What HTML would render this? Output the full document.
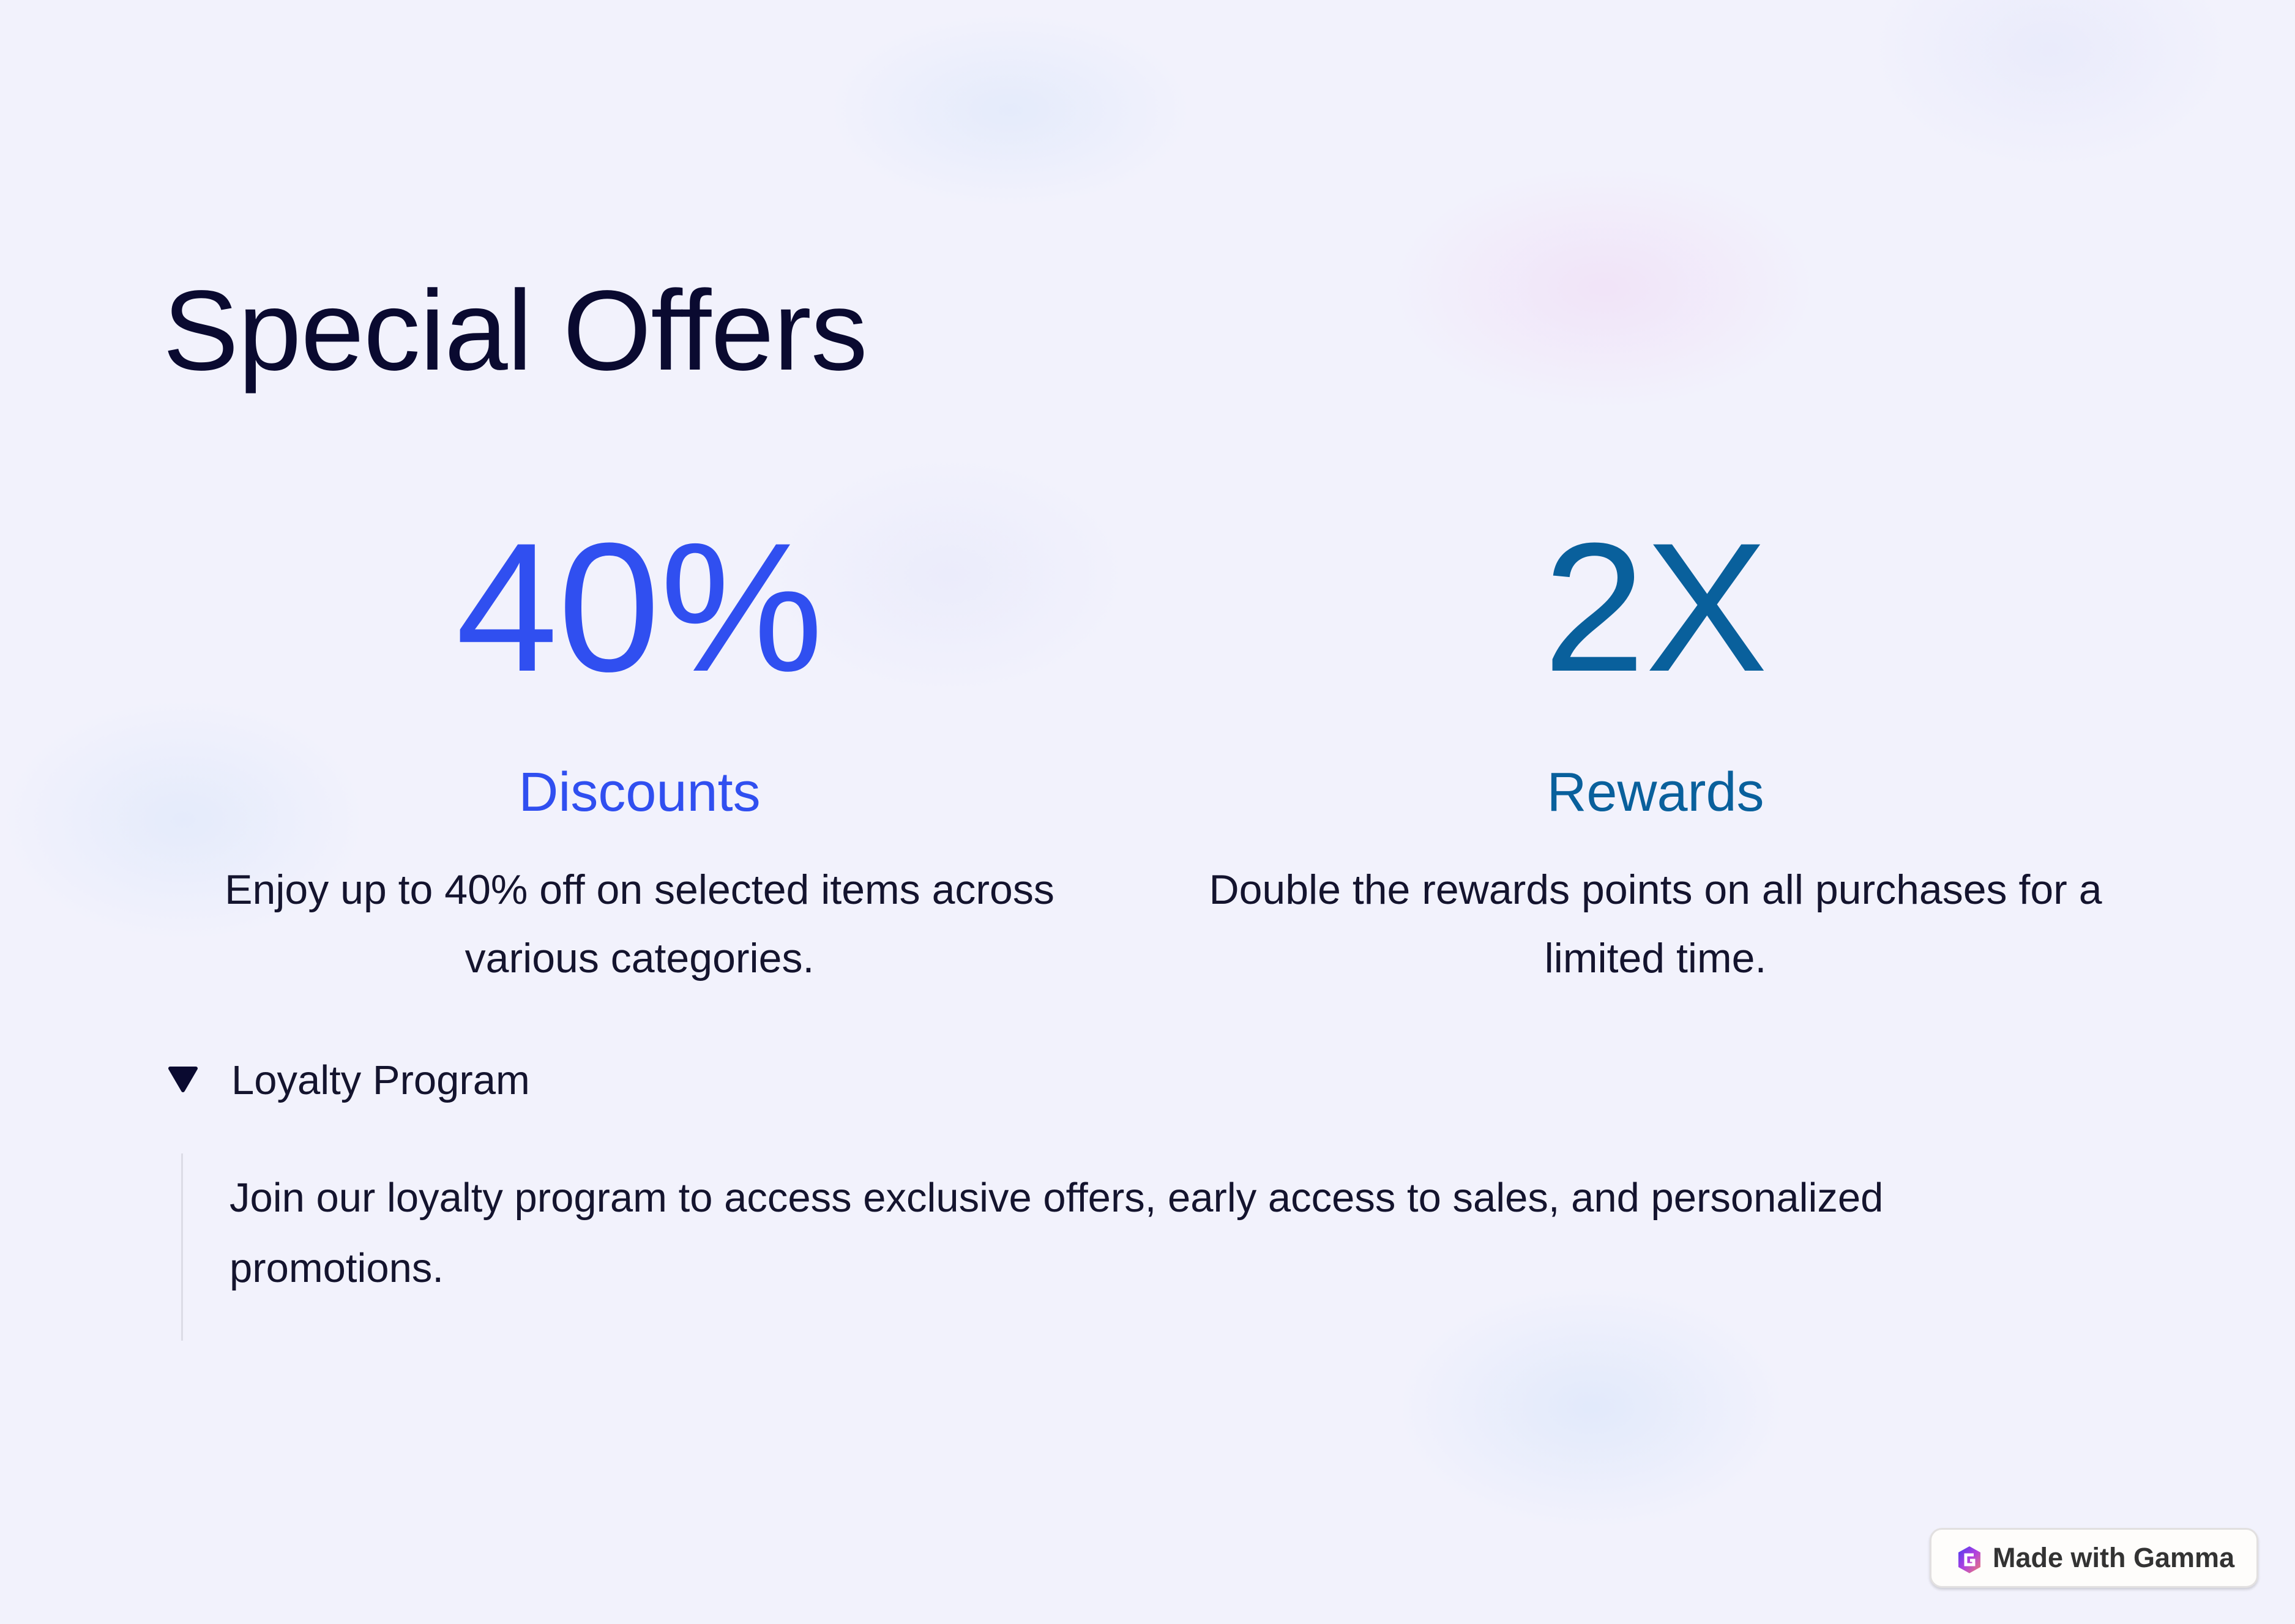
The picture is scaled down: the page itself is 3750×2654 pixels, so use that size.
<!DOCTYPE html>
<html><head><meta charset="utf-8"><style>
html,body{margin:0;padding:0}
body{width:3750px;height:2654px;overflow:hidden;position:relative;font-family:"Liberation Sans",sans-serif;
background:
radial-gradient(ellipse 300px 160px at 1650px 180px,rgba(215,228,250,.5),transparent),
radial-gradient(ellipse 350px 200px at 2620px 470px,rgba(240,218,245,.6),transparent),
radial-gradient(ellipse 300px 200px at 300px 1340px,rgba(215,228,250,.5),transparent),
radial-gradient(ellipse 320px 200px at 2600px 2300px,rgba(215,228,250,.6),transparent),
radial-gradient(ellipse 300px 200px at 3350px 80px,rgba(225,228,250,.5),transparent),
radial-gradient(ellipse 300px 200px at 1550px 940px,rgba(228,230,250,.5),transparent),
#f2f2fc;}
.a{position:absolute;white-space:nowrap}
.c{position:absolute;width:1700px;text-align:center}
</style></head><body>
<div class="a" style="left:266px;top:448px;font-size:186px;color:#0a0a30;letter-spacing:-1px;line-height:1">Special Offers</div>
<div class="c" style="left:195px;top:842px;font-size:300px;color:#304ff0;line-height:1">40%</div>
<div class="c" style="left:1855px;top:842px;font-size:300px;color:#09609c;line-height:1">2X</div>
<div class="c" style="left:195px;top:1250px;font-size:90px;color:#304ff0;line-height:1">Discounts</div>
<div class="c" style="left:1855px;top:1250px;font-size:90px;color:#09609c;line-height:1">Rewards</div>
<div class="c" style="left:195px;top:1398px;font-size:68px;color:#14142e;line-height:112px">Enjoy up to 40% off on selected items across<br>various categories.</div>
<div class="c" style="left:1855px;top:1398px;font-size:68px;color:#14142e;line-height:112px">Double the rewards points on all purchases for a<br>limited time.</div>
<svg class="a" style="left:274px;top:1742px" width="50" height="44" viewBox="0 0 50 44"><path d="M4 4 H46 L25 40 Z" fill="#0a0a30" stroke="#0a0a30" stroke-width="6" stroke-linejoin="round"/></svg>
<div class="a" style="left:378px;top:1728px;font-size:67px;color:#14142e;line-height:76px">Loyalty Program</div>
<div class="a" style="left:296px;top:1885px;width:3px;height:306px;background:#dcdce6"></div>
<div class="a" style="left:375px;top:1900px;font-size:67px;color:#14142e;line-height:115px">Join our loyalty program to access exclusive offers, early access to sales, and personalized<br>promotions.</div>
<div class="a" style="left:3153px;top:2497px;width:531px;height:92px;background:#fefdfb;border:3px solid #e2e0e0;border-radius:20px;box-shadow:0 3px 4px rgba(0,0,0,.15)">
<svg style="position:absolute;left:42px;top:26px" width="40" height="46" viewBox="0 0 40 46"><defs><linearGradient id="g" x1="0" y1="0" x2="1" y2="1"><stop offset="0" stop-color="#4a3cf0"/><stop offset=".5" stop-color="#b040e0"/><stop offset="1" stop-color="#f08070"/></linearGradient></defs><path d="M20 1 L38 11 V35 L20 45 L2 35 V11 Z" fill="url(#g)"/><path d="M27 15 H14 V31 H27 V24 H21" fill="none" stroke="#fff" stroke-width="5"/></svg>
<div style="position:absolute;left:100px;top:16px;font-size:45px;font-weight:bold;color:#333;line-height:60px">Made with Gamma</div>
</div>
</body></html>
